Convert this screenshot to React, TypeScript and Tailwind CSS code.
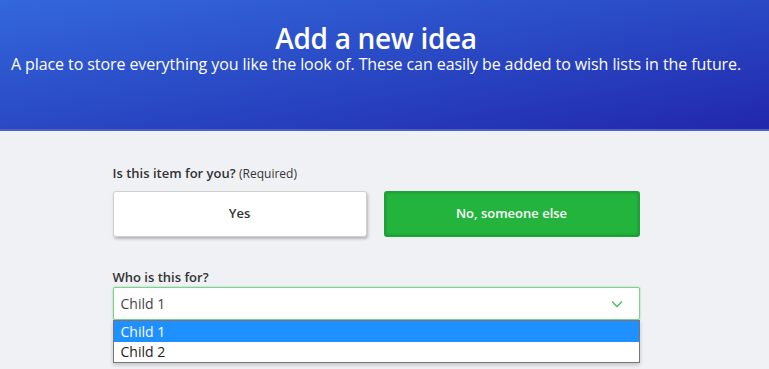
import React from "react";

export default function App() {
  return (
    <div className="min-h-[369px] bg-[#f0f1f5]" style={{ fontFamily: '"Open Sans", "Noto Sans", sans-serif' }}>
      <div className="h-[131px] bg-gradient-to-br from-[#3467dc] to-[#2226ad] border-b-2 border-[#4f5fc8]">
        <div className="w-[752px] flex flex-col items-center pt-[23px] text-white">
          <h1 className="text-[28px] font-semibold leading-[30px] tracking-[-0.3px]">Add a new idea</h1>
          <p className="text-[16px] leading-[20px] tracking-[-0.08px] mt-[1px] whitespace-nowrap">A place to store everything you like the look of. These can easily be added to wish lists in the future.</p>
        </div>
      </div>
      <div className="w-[752px]">
        <div className="w-[527px] mx-auto pt-[33px] text-[#333]">
          <div className="text-[13px] leading-[18px] font-semibold">Is this item for you? <span className="text-[12px] font-normal">(Required)</span></div>
          <div className="flex gap-[17px] mt-[8px]">
            <button className="flex-1 h-[46px] bg-white border border-[#cfcfcf] rounded-[3px] shadow-[1px_2px_3px_rgba(0,0,0,0.25)] text-[13px] font-semibold text-[#333]">Yes</button>
            <button className="flex-1 h-[46px] bg-[#22b43c] border-2 border-[#1ea236] rounded-[3px] shadow-[inset_0_0_2px_rgba(0,90,20,0.4)] text-[13px] font-semibold text-white">No, someone else</button>
          </div>
          <div className="mt-[31px] text-[13px] leading-[18px] font-semibold">Who is this for?</div>
          <div className="relative mt-[1px]">
            <div className="h-[33px] bg-white border-[1.5px] border-[#7dd38c] rounded-[2px] shadow-[0_0_2px_rgba(34,180,60,0.5)] flex items-center justify-between pl-[7px] pr-[16px] text-[14px] text-[#444]">
              <span>Child 1</span>
              <svg width="12" height="8" viewBox="0 0 12 8"><path d="M1 1.5 L6 6.5 L11 1.5" fill="none" stroke="#3fbf58" strokeWidth="1.3" /></svg>
            </div>
            <div className="border border-[#767676] bg-white text-[14px] text-[#222] shadow-[0_2px_4px_rgba(0,0,0,0.2)]">
              <div className="h-[21px] leading-[21px] pl-[7px] bg-[#1e90ff] text-white">Child 1</div>
              <div className="h-[20px] leading-[20px] pl-[7px]">Child 2</div>
            </div>
          </div>
        </div>
      </div>
    </div>
  );
}
